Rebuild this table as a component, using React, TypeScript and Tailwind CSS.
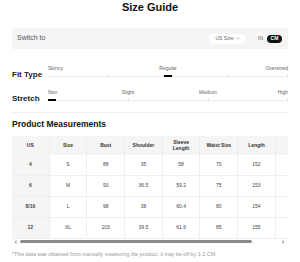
import React from "react";

const cols = ["US", "Size", "Bust", "Shoulder", "Sleeve Length", "Waist Size", "Length", ""];
const rows = [
  ["4", "S", "88", "35", "58", "70", "152", ""],
  ["6", "M", "93", "36.5", "59.2", "75", "153", ""],
  ["8/10", "L", "98", "38", "60.4", "80", "154", ""],
  ["12", "XL", "103", "39.5", "61.6", "85", "155", ""],
];

function Scale({
  labels,
  ticks,
  thumb,
}: {
  labels: { text: string; pos: number }[];
  ticks: number[];
  thumb: number;
}) {
  return (
    <div className="relative flex-1 h-[13px]">
      {labels.map((l, i) => {
        const tr = l.pos === 0 ? "0%" : l.pos === 1 ? "-100%" : "-50%";
        return (
          <span
            key={i}
            className="absolute top-0 text-[5px] leading-[6px] text-[#666] whitespace-nowrap"
            style={{ left: `${l.pos * 100}%`, transform: `translateX(${tr})` }}
          >
            {l.text}
          </span>
        );
      })}
      <div className="absolute left-0 right-0 top-[11px] h-px bg-[#ececec]" />
      {ticks.map((t, i) => (
        <div
          key={i}
          className="absolute top-[9px] w-px h-[3px] bg-[#e4e4e4]"
          style={{ left: `${t * 100}%` }}
        />
      ))}
      <div
        className="absolute top-[10px] w-[8px] h-[2px] bg-black"
        style={{ left: `calc(${thumb * 100}% - ${thumb * 8}px)` }}
      />
    </div>
  );
}

export default function App() {
  return (
    <div
      className="w-[300px] h-[262px] bg-white overflow-hidden"
      style={{ fontFamily: '"Liberation Sans", Arial, sans-serif' }}
    >
      <div className="h-[14px] text-center text-[11px] leading-[14px] font-bold text-[#111]">
        Size Guide
      </div>

      <div className="mx-[12px] mt-[14px] h-[21px] bg-[#f5f5f5] flex items-center pl-[5px] pr-[6px]">
        <span className="text-[7px] text-[#555]">Switch to</span>
        <div className="ml-auto flex items-center">
          <div className="h-[10px] w-[37px] bg-white rounded-full flex items-center justify-center gap-[2px] text-[5px] text-[#666]">
            <span>US Size</span>
            <svg width="4" height="3" viewBox="0 0 4 3">
              <path d="M0.5 0.8 L2 2.2 L3.5 0.8" stroke="#888" strokeWidth="0.6" fill="none" />
            </svg>
          </div>
          <span className="ml-[12px] text-[5px] text-[#666]">IN</span>
          <div className="ml-[4px] h-[8px] w-[15px] bg-[#111] rounded-full flex items-center justify-center text-[5px] font-bold text-white">
            CM
          </div>
        </div>
      </div>

      <div className="mx-[12px] mt-[16px] flex items-start">
        <div className="w-[36px] pt-[5px] text-[8px] leading-[10px] font-bold text-[#222]">Fit Type</div>
        <Scale
          labels={[
            { text: "Skinny", pos: 0 },
            { text: "Regular", pos: 0.5 },
            { text: "Oversized", pos: 1 },
          ]}
          ticks={[0.25, 0.75, 0.997]}
          thumb={0.5}
        />
      </div>
      <div className="mx-[12px] mt-[9px] pb-[8px] flex items-start border-b border-[#f0f0f0]">
        <div className="w-[36px] pt-[5px] text-[8px] leading-[10px] font-bold text-[#222]">Stretch</div>
        <Scale
          labels={[
            { text: "Non", pos: 0 },
            { text: "Slight", pos: 1 / 3 },
            { text: "Medium", pos: 2 / 3 },
            { text: "High", pos: 1 },
          ]}
          ticks={[1 / 3, 2 / 3, 0.997]}
          thumb={0}
        />
      </div>

      <div className="mx-[12px] mt-[6px] text-[8.5px] leading-[10px] font-bold text-[#111]">
        Product Measurements
      </div>

      <div className="mx-[12px] mt-[7px] overflow-hidden">
        <div className="w-[302px]">
          <div className="flex h-[19px] bg-[#f5f5f5]">
            {cols.map((c, i) => (
              <div
                key={i}
                className="w-[37.7px] shrink-0 flex items-center justify-center text-center text-[5px] leading-[5.5px] font-bold text-[#333] border-r border-[#ececec] px-[1px]"
              >
                {c === "Sleeve Length" ? (
                  <span>
                    Sleeve
                    <br />
                    Length
                  </span>
                ) : (
                  c
                )}
              </div>
            ))}
          </div>
          {rows.map((r, ri) => (
            <div key={ri} className="flex h-[21px] border-b border-[#efefef]">
              {r.map((v, i) => (
                <div
                  key={i}
                  className={`w-[37.7px] shrink-0 flex items-center justify-center text-[5px] text-[#444] border-r border-[#efefef] ${
                    i === 0 ? "bg-[#f5f5f5] font-bold text-[#333]" : ""
                  }`}
                >
                  {v}
                </div>
              ))}
            </div>
          ))}
        </div>
        <div className="relative h-[5px]">
          <svg className="absolute left-[2px] top-[1px]" width="3" height="4" viewBox="0 0 3 4">
            <path d="M2.5 0 L0.5 2 L2.5 4 Z" fill="#999" />
          </svg>
          <div className="absolute left-[8px] w-[232px] top-[1px] h-[3px] rounded-full bg-[#8c8c8c]" />
          <svg className="absolute right-[3px] top-[1px]" width="3" height="4" viewBox="0 0 3 4">
            <path d="M0.5 0 L2.5 2 L0.5 4 Z" fill="#999" />
          </svg>
        </div>
      </div>

      <div className="mx-[12px] mt-[7px] text-[5.3px] leading-[6px] text-[#9a9a9a] whitespace-nowrap">
        *This data was obtained from manually measuring the product, it may be off by 1-2 CM.
      </div>
    </div>
  );
}
